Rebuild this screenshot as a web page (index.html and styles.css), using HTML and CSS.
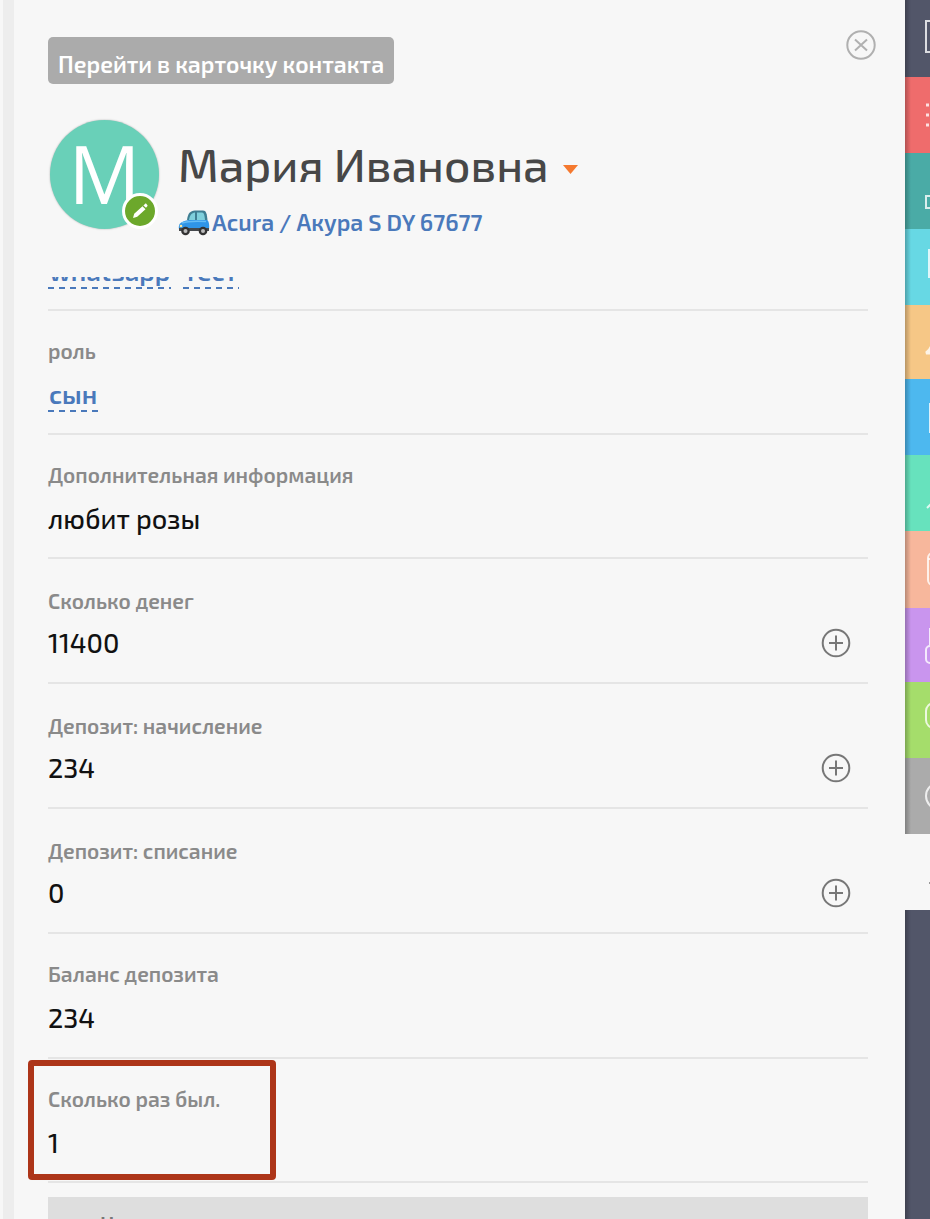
FILE: index.html
```html
<!DOCTYPE html>
<html lang="ru">
<head>
  <meta charset="UTF-8">
  <meta name="viewport" content="width=device-width, initial-scale=1">
  <title>Мария Ивановна</title>
  <link rel="stylesheet" href="styles.css">
</head>
<body>

<main class="panel">

  <div class="toolbar">
    <button type="button" class="card-button">Перейти в карточку контакта</button>
    <button type="button" class="close-button" aria-label="Закрыть">
      <svg width="30" height="30" viewBox="0 0 30 30"><circle cx="15" cy="15" r="13.7"/><path d="M9 9.5l12 11M21 9.5l-12 11"/></svg>
    </button>
  </div>

  <header class="contact">
    <div class="avatar">
      М
      <button type="button" class="avatar-edit" aria-label="Изменить">
        <svg width="18" height="18" viewBox="0 0 18 18"><path d="M2 16l1.2-4.2 8.3-7.6 3 3-8.3 7.6zM12.4 3.4l1.6-1.5c.5-.4 1-.4 1.4 0l.9 1c.4.4.4.9 0 1.3l-1.3 1.6z"/></svg>
      </button>
    </div>
    <div class="contact-info">
      <h1 class="contact-name">Мария Ивановна
        <svg class="caret" width="15" height="9" viewBox="0 0 15 9"><path d="M0 0h15L7.500 9z"/></svg>
      </h1>
      <a href="#" class="contact-car">
        <svg width="32" height="28" viewBox="0 0 32 28">
          <path d="M9 12c1-7 3-9 8-9.500h8c3 0 4 3 4.500 10z" fill="#3f7f93"/>
          <path d="M11 12c1-5 2.500-7 6-7.500V12zM19 4.500h5c2 0 2.700 3 3 7.500h-8z" fill="#7fd0dc"/>
          <path d="M2 15.500c2-2 5-3 9-3.500h18c2 1 2.500 5 2 9.500H1c-.5-2.500-.2-4.500 1-6z" fill="#2f95e8"/>
          <path d="M4 15c6-2 15-2 24-1.500" stroke="#66bdf6" stroke-width="1.500" fill="none"/>
          <path d="M1 20h30v3H1z" fill="#45494d"/>
          <circle cx="7.500" cy="23" r="4.300" fill="#333"/><circle cx="7.500" cy="23" r="2" fill="#bbb"/>
          <circle cx="25" cy="23" r="4.300" fill="#333"/><circle cx="25" cy="23" r="2" fill="#bbb"/>
          <circle cx="3" cy="18" r="1.300" fill="#ffe9a0"/>
        </svg>
        Acura / Акура S DY 67677
      </a>
    </div>
  </header>

  <div class="fields">
    <div class="field field-tags">
      <a href="#" class="tag">whatsapp</a>
      <a href="#" class="tag">тест</a>
    </div>
    <div class="field">
      <div class="field-label">роль</div>
      <div class="field-value"><a href="#" class="tag tag-role">сын</a></div>
    </div>
    <div class="field">
      <div class="field-label">Дополнительная информация</div>
      <div class="field-value">любит розы</div>
    </div>
    <div class="field field-amount">
      <div class="field-label">Сколько денег</div>
      <div class="field-value">11400</div>
      <button type="button" class="add-button" aria-label="Добавить">
        <svg width="30" height="30" viewBox="0 0 30 30"><circle cx="15" cy="15" r="13.300"/><path d="M8 15h14M15 7.500v15"/></svg>
      </button>
    </div>
    <div class="field field-amount">
      <div class="field-label">Депозит: начисление</div>
      <div class="field-value">234</div>
      <button type="button" class="add-button" aria-label="Добавить">
        <svg width="30" height="30" viewBox="0 0 30 30"><circle cx="15" cy="15" r="13.300"/><path d="M8 15h14M15 7.500v15"/></svg>
      </button>
    </div>
    <div class="field field-amount">
      <div class="field-label">Депозит: списание</div>
      <div class="field-value">0</div>
      <button type="button" class="add-button" aria-label="Добавить">
        <svg width="30" height="30" viewBox="0 0 30 30"><circle cx="15" cy="15" r="13.300"/><path d="M8 15h14M15 7.500v15"/></svg>
      </button>
    </div>
    <div class="field field-total">
      <div class="field-label">Баланс депозита</div>
      <div class="field-value">234</div>
    </div>
    <div class="field field-marked">
      <div class="field-label">Сколько раз был.</div>
      <div class="field-value">1</div>
    </div>
    <div class="section-bar">Н</div>
  </div>

</main>

<nav class="sidebar">
  <a href="#" class="side-item tall" aria-label="Главная"><svg width="26" height="76" viewBox="0 0 26 76"><path d="M40 21H21v31h19"/></svg></a>
  <a href="#" class="side-item red" aria-label="Список"><svg width="26" height="76" viewBox="0 0 26 76"><path d="M21 28h3M21 38h3M21 48h3" stroke-width="3"/></svg></a>
  <a href="#" class="side-item teal" aria-label="Структура"><svg width="26" height="76" viewBox="0 0 26 76"><path d="M40 43H21v12h19"/></svg></a>
  <a href="#" class="side-item cyan" aria-label="Документы"><svg width="26" height="76" viewBox="0 0 26 76"><path d="M25 20v29" stroke-width="4"/></svg></a>
  <a href="#" class="side-item orange short" aria-label="Контакты"><svg width="26" height="74" viewBox="0 0 26 74"><path d="M28 35c-1 8-3 11-7 13h8" stroke-width="3"/></svg></a>
  <a href="#" class="side-item blue" aria-label="Задачи"><svg width="26" height="76" viewBox="0 0 26 76"><path d="M25 24v30"/></svg></a>
  <a href="#" class="side-item mint" aria-label="Отчёты"><svg width="26" height="76" viewBox="0 0 26 76"><path d="M22 53l5-5"/></svg></a>
  <a href="#" class="side-item peach tall" aria-label="Календарь"><svg width="26" height="76" viewBox="0 0 26 76"><rect x="23" y="22" width="30" height="32" rx="5"/><path d="M23 28h5"/></svg></a>
  <a href="#" class="side-item violet short" aria-label="Связи"><svg width="26" height="74" viewBox="0 0 26 74"><path d="M25 20v17"/><rect x="21" y="38" width="20" height="17" rx="4"/></svg></a>
  <a href="#" class="side-item green" aria-label="Склад"><svg width="26" height="76" viewBox="0 0 26 76"><rect x="21" y="21" width="30" height="25" rx="8"/></svg></a>
  <a href="#" class="side-item grey" aria-label="Справка"><svg width="26" height="76" viewBox="0 0 26 76"><circle cx="34" cy="38" r="13"/></svg></a>
  <a href="#" class="side-item light" aria-label="Свернуть"><svg width="26" height="76" viewBox="0 0 26 76"><path d="M24 49h4" stroke="#999"/></svg></a>
</nav>

</body>
</html>
```
FILE: styles.css
```css
:root {
  --bg: #f7f7f7;
  --line: #e5e5e5;
  --link: #4a79bb;
  --label: #8a8a8a;
  --dark: #525669;
}

*,
*::after {
  box-sizing: border-box;
}

body {
  margin: 0;
  height: 100vh;
  overflow: hidden;
  display: flex;
  background-color: var(--bg);
  font-family: "Exo 2", Roboto, "Noto Sans", sans-serif;
  font-weight: 600;
}

button {
  font: inherit;
  border: none;
  padding: 0;
  background: none;
  cursor: pointer;
}

a {
  color: var(--link);
  text-decoration: none;
}

svg {
  display: block;
  fill: none;
}

/* Contact panel */
.panel {
  flex: 1;
  min-width: 0;
  display: flex;
  flex-direction: column;
  margin-left: 3px;
  border-left: 11px solid #ededed;
  padding: 30px 37px 0 34px;
}

.toolbar {
  display: flex;
  justify-content: space-between;
  align-items: flex-start;
  margin-right: -8px;
}

.card-button {
  margin-top: 7px;
  height: 47px;
  padding: 6px 10px 0;
  border-radius: 5px;
  background-color: #ababab;
  color: #fff;
  font-size: 23px;
}

.close-button svg {
  stroke: #b0b0b0;
  stroke-width: 2;
}

/* Name and avatar */
.contact {
  display: flex;
  gap: 19px;
  padding: 36px 0 0 2px;
  height: 193px;
  flex-shrink: 0;
}

.avatar {
  position: relative;
  flex-shrink: 0;
  width: 109px;
  height: 109px;
  border-radius: 50%;
  background-color: #69d0b8;
  box-shadow: 0 0 2px rgba(0,0,0,0.3);
  color: #fff;
  font: 400 80px/105px "Open Sans", sans-serif;
  text-align: center;
}

.avatar-edit {
  position: absolute;
  right: 1px;
  bottom: 0;
  width: 36px;
  height: 36px;
  padding: 6px;
  border: 3px solid #fff;
  border-radius: 50%;
  background-color: #6ca82b;
}

.avatar-edit svg {
  fill: #fff;
}

.contact-name {
  display: flex;
  align-items: center;
  gap: 14px;
  margin: 16px 0 0;
  color: #474747;
  font-size: 46px;
  line-height: 56px;
  font-weight: 500;
}

.caret {
  margin-top: 10px;
  fill: #f5792f;
}

.contact-car {
  display: flex;
  align-items: center;
  gap: 2px;
  margin-top: 16px;
  font-size: 23px;
  line-height: 28px;
}

/* Fields */
.fields {
  flex: 1;
  min-height: 0;
  overflow: hidden;
  margin-left: -20px;
  padding-left: 20px;
}

.field {
  position: relative;
  padding: 27px 0 23px;
  border-bottom: 2px solid var(--line);
}

.field-label {
  color: var(--label);
  font-size: 21px;
  line-height: 26px;
}

.field-value {
  margin-top: 14px;
  color: #111;
  font-size: 27px;
  line-height: 32px;
  font-weight: 500;
}

.field-tags {
  display: flex;
  gap: 12px;
  margin-top: -20px;
  padding: 0 0 20px;
}

.tag {
  height: 32px;
  font-size: 26px;
  line-height: 32px;
  font-weight: 600;
  background: repeating-linear-gradient(90deg, var(--link) 0 6px, transparent 6px 11px) left bottom / 100% 2px no-repeat;
}

.field-tags .tag {
  padding: 0 1px;
  line-height: 28px;
}

.tag-role {
  display: inline-block;
  vertical-align: top;
  height: 34px;
  margin-bottom: -2px;
  padding: 0 1px;
}

.field-amount {
  padding: 29px 0 24px;
}

.field-amount .field-value {
  margin-top: 12px;
}

.field-total {
  padding-bottom: 24px;
}

.add-button {
  position: absolute;
  right: 17px;
  top: 69px;
}

.add-button svg {
  stroke: #777;
  stroke-width: 2;
}

.field-marked::after {
  content: "";
  position: absolute;
  left: -20px;
  top: 1px;
  width: 248px;
  height: 120px;
  border: 6px solid #ad3519;
  border-radius: 4px;
}

.section-bar {
  margin-top: 14px;
  height: 60px;
  padding: 14px 52px;
  background-color: #dedede;
  color: #777;
  font-size: 21px;
  line-height: 26px;
}

/* Side menu */
.sidebar {
  position: relative;
  width: 25px;
  overflow: hidden;
  background-color: var(--dark);
}

.sidebar::after {
  content: "";
  position: absolute;
  left: 0;
  top: 0;
  width: 6px;
  height: 100%;
  background: linear-gradient(90deg, rgba(0,0,0,0.25), rgba(0,0,0,0));
}

.side-item {
  display: block;
  height: 76px;
}

.side-item svg {
  stroke: rgba(255,255,255,0.8);
  stroke-width: 2;
}

.tall { height: 77px; }
.short { height: 74px; }
.red { background-color: #ef6c6c; }
.teal { background-color: #4aaba6; }
.cyan { background-color: #67d8e4; }
.orange { background-color: #f6c786; }
.blue { background-color: #4db8ef; }
.mint { background-color: #67e2bd; }
.peach { background-color: #f7b79c; }
.violet { background-color: #c995ee; }
.green { background-color: #a5dd6b; }
.grey { background-color: #ababab; }

.light {
  position: relative;
  z-index: 1;
  background-color: var(--bg);
}
```
